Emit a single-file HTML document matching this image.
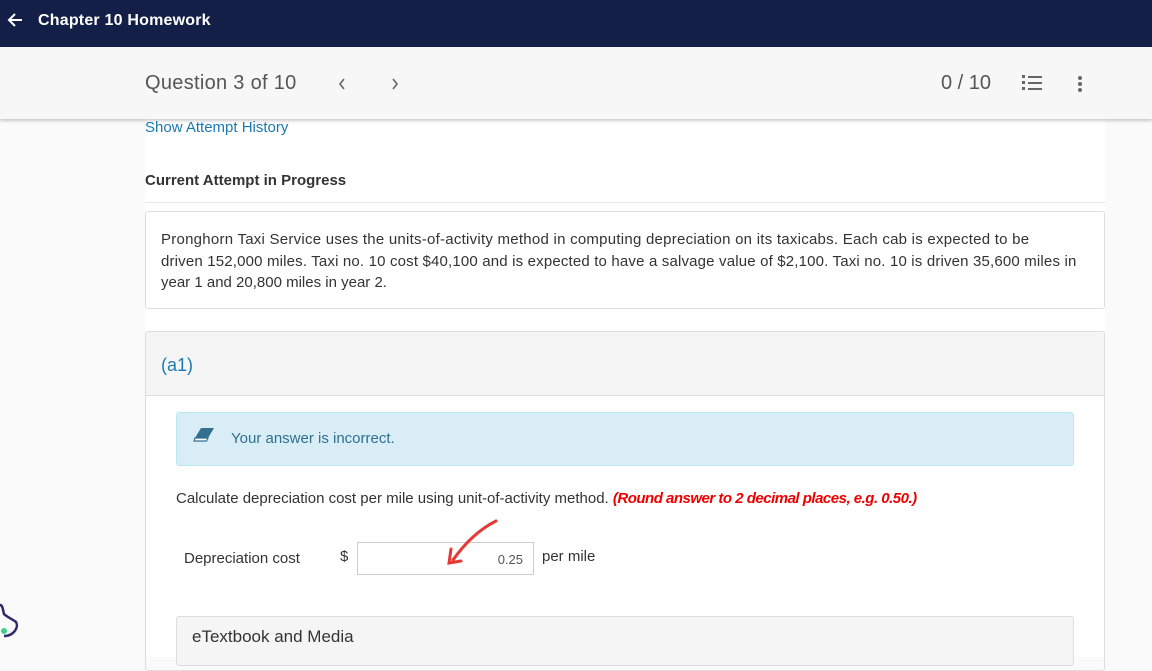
<!DOCTYPE html>
<html><head><style>
*{box-sizing:border-box;margin:0;padding:0}
body{width:1152px;height:657px;overflow:hidden;background:#fafafa;font-family:"Liberation Sans",sans-serif;position:relative;color:#333}
.abs{position:absolute}
.hdr{left:0;top:0;width:1152px;height:47px;background:#141f47;color:#fff}
.bar{left:0;top:47px;width:1152px;height:72px;background:#f7f7f7;box-shadow:0 2px 3px rgba(0,0,0,.2);z-index:2}
.col{left:145px;top:119px;width:960px;height:538px;background:#fff}
</style></head><body>
<div class="abs hdr">
<svg class="abs" style="left:6px;top:11px" width="18" height="18" viewBox="0 0 18 18"><path d="M16 9H3M9 3L3 9l6 6" stroke="#fff" stroke-width="2" fill="none"/></svg>
<div class="abs" style="left:38px;top:12px;font-size:16px;font-weight:bold;letter-spacing:.2px">Chapter 10 Homework</div>
</div>
<div class="abs bar">
<div class="abs" style="left:145px;top:25px;font-size:20px;color:#555;letter-spacing:.3px">Question 3 of 10</div>
<svg class="abs" style="left:337px;top:30px" width="10" height="14"><path d="M7 2L3 7l4 5" stroke="#666" stroke-width="1.6" fill="none"/></svg>
<svg class="abs" style="left:390px;top:30px" width="10" height="14"><path d="M3 2l4 5-4 5" stroke="#666" stroke-width="1.6" fill="none"/></svg>
<div class="abs" style="left:941px;top:25px;font-size:20px;color:#555">0 / 10</div>
<svg class="abs" style="left:1021px;top:27px" width="22" height="18"><g fill="#666"><rect x="7" y="2" width="14" height="2"/><rect x="7" y="8" width="14" height="2"/><rect x="7" y="14" width="14" height="2"/><rect x="1" y="1" width="3" height="3"/><rect x="1" y="7" width="3" height="3"/><rect x="1" y="13" width="3" height="3"/></g></svg>
<svg class="abs" style="left:1076px;top:28px" width="8" height="18"><g fill="#666"><circle cx="4" cy="3" r="2"/><circle cx="4" cy="9" r="2"/><circle cx="4" cy="15" r="2"/></g></svg>
</div>
<div class="abs col"></div>
<div class="abs" style="left:145px;top:119px;font-size:15px;color:#1a7ab0">Show Attempt History</div>
<div class="abs" style="left:145px;top:172px;font-size:15px;font-weight:bold;color:#333">Current Attempt in Progress</div>
<div class="abs" style="left:145px;top:202px;width:960px;height:1px;background:#e5e5e5"></div>
<div class="abs" style="left:145px;top:211px;width:960px;height:98px;border:1px solid #ddd;border-radius:3px"></div>
<div class="abs" style="left:161px;top:229px;font-size:15px;line-height:21.5px;color:#333;white-space:nowrap"><span style="letter-spacing:.25px">Pronghorn Taxi Service uses the units-of-activity method in computing depreciation on its taxicabs. Each cab is expected to be</span><br><span style="letter-spacing:.17px">driven 152,000 miles. Taxi no. 10 cost $40,100 and is expected to have a salvage value of $2,100. Taxi no. 10 is driven 35,600 miles in</span><br>year 1 and 20,800 miles in year 2.</div>
<div class="abs" style="left:145px;top:331px;width:960px;height:340px;border:1px solid #ddd;border-radius:3px"></div>
<div class="abs" style="left:146px;top:332px;width:958px;height:64px;background:#f5f5f5;border-bottom:1px solid #ddd"></div>
<div class="abs" style="left:161px;top:355px;font-size:18px;color:#1a7ab0">(a1)</div>
<div class="abs" style="left:176px;top:412px;width:898px;height:54px;background:#d9edf7;border:1px solid #bce8f1;border-radius:3px"></div>
<svg class="abs" style="left:192px;top:427px" width="24" height="16"><path d="M9 1h13l-6 10H3z" fill="#31708f"/><path d="M3 11h13l-1.5 3H2z" fill="#fff" stroke="#31708f" stroke-width="1.2"/></svg>
<div class="abs" style="left:231px;top:430px;font-size:15px;color:#31708f">Your answer is incorrect.</div>
<div class="abs" style="left:176px;top:490px;font-size:15px;color:#333">Calculate depreciation cost per mile using unit-of-activity method. <i style="color:#e00;font-weight:bold;letter-spacing:-.5px">(Round answer to 2 decimal places, e.g. 0.50.)</i></div>
<div class="abs" style="left:184px;top:550px;font-size:15px;color:#333">Depreciation cost</div>
<div class="abs" style="left:340px;top:548px;font-size:15px">$</div>
<div class="abs" style="left:357px;top:542px;width:177px;height:33px;border:1px solid #ccc;font-size:13px;color:#555;text-align:right;padding:9px 10px">0.25</div>
<div class="abs" style="left:542px;top:548px;font-size:15px">per mile</div>
<svg class="abs" style="left:440px;top:515px" width="65" height="55"><path d="M56 6C40 14 25 28 13 45M11 34L9 48l12-2" stroke="#e53935" stroke-width="3" fill="none" stroke-linecap="round"/></svg>
<div class="abs" style="left:176px;top:616px;width:898px;height:50px;background:#f5f5f5;border:1px solid #ddd;border-radius:3px;padding:10px 15px;font-size:17px;color:#333">eTextbook and Media</div>
<svg class="abs" style="left:0;top:600px" width="20" height="40"><path d="M0 5c3 0 3 6 4 9 3 3 8 5 12 8 3 5-2 14-12 14" stroke="#2d2a6e" stroke-width="2.5" fill="none"/><circle cx="4" cy="31" r="3" fill="#3ecf8e"/></svg>
</body></html>
